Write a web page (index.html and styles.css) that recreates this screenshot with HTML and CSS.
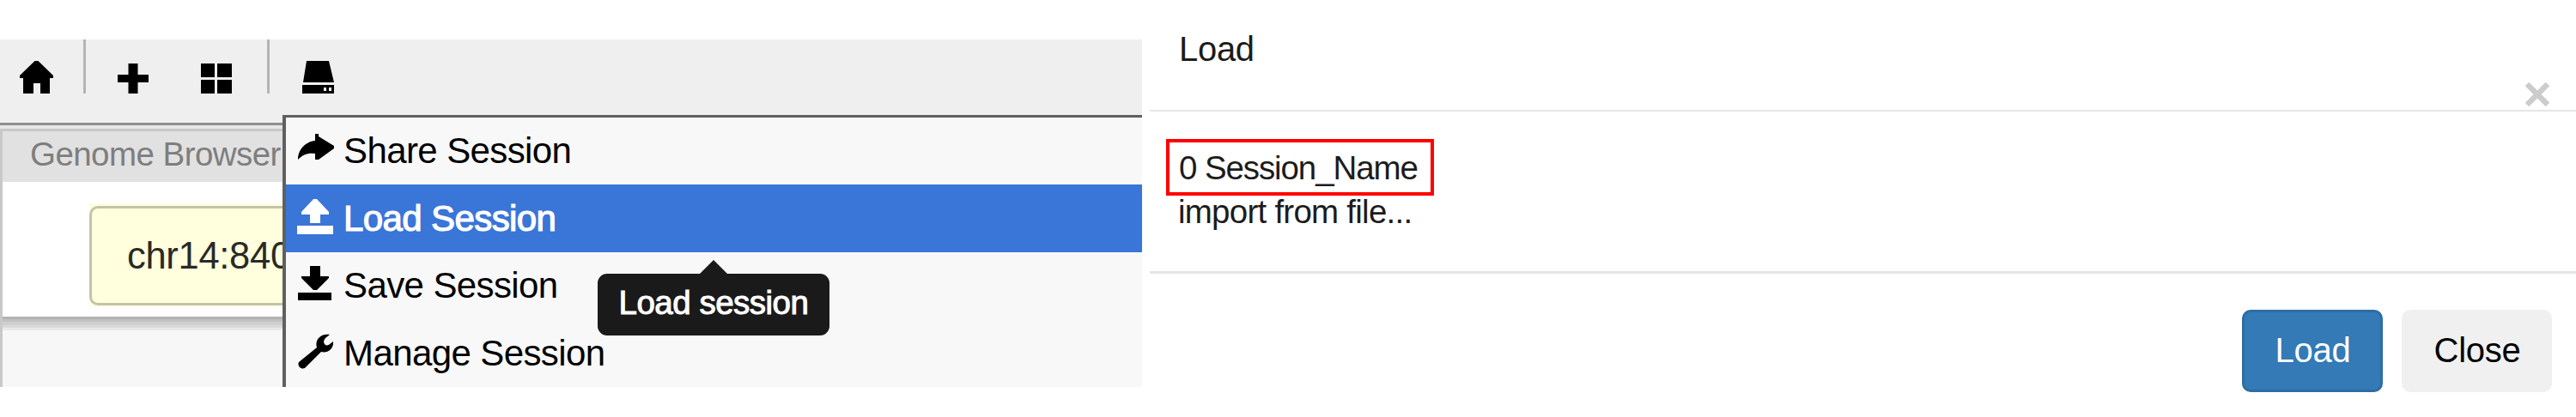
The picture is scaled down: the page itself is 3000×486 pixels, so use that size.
FILE: index.html
```html
<!DOCTYPE html>
<html lang="en">
<head>
<meta charset="utf-8">
<title>Sessions</title>
<link rel="stylesheet" href="styles.css">
</head>
<body>
<div class="page">
  <section class="browser">
    <nav class="toolbar">
      <svg class="tool home" width="44" height="39" viewBox="0 0 44 39"><path d="M19.500 0H23.500L41 17V20H37V38H26V26H18V38H6V20H2V17Z"/></svg>
      <i class="divider"></i>
      <svg class="tool plus" width="40" height="39" viewBox="0 0 40 39"><path d="M13.500 3h11v13H37v9H24.500v13h-11V25H1v-9h12.500z"/></svg>
      <svg class="tool grid" width="40" height="39" viewBox="0 0 40 39"><path d="M1 3h16v16H1zM20 3h17v16H20zM1 22h16v16H1zM20 22h17v16H20z"/></svg>
      <i class="divider second"></i>
      <svg class="tool drive" width="42" height="39" viewBox="0 0 42 39"><path d="M6 0H32L38 25H2ZM1 28H38V38H1Z"/><path class="light" d="M26 31h3v4h-3zM32 31h3v4h-3z"/></svg>
    </nav>
    <div class="gap"></div>
    <div class="panel">
      <div class="panel-head">Genome Browser</div>
      <div class="panel-body"><div class="field"><div class="field-inner">chr14:840</div></div></div>
      <div class="panel-rest"></div>
    </div>
    <div class="menu">
      <div class="item"><svg width="44" height="42" viewBox="0 0 44 42"><path d="M21 3h4V6L43 17V20L25 33H21V26C12 25 7 27 1 33C1 21 10 12 21 11Z"/></svg><span>Share Session</span></div>
      <div class="item active"><svg width="44" height="42" viewBox="0 0 44 42"><path d="M19 0H23L37 15V18H27V28H15V18H5V15ZM0 31H42V41H0Z"/></svg><span>Load Session</span></div>
      <div class="item"><svg width="44" height="42" viewBox="0 0 44 42"><path d="M15 0H27V12H37V14L23 28H19L5 14V12H15ZM1 31H40V40H1Z"/></svg><span>Save Session</span></div>
      <div class="item"><svg width="44" height="42" viewBox="0 0 44 42"><path d="M38 1C29-1 20 6 23 16L2 33C0 37 4 42 9 40L28 21C35 23 43 18 42 9L38 12C34 16 28 11 33 5Z"/></svg><span>Manage Session</span></div>
    </div>
    <div class="tooltip">Load session</div>
  </section>

  <section class="dialog">
    <header class="dialog-head">
      <span class="title">Load</span>
      <svg class="close" width="30" height="30" viewBox="0 0 30 30"><path d="M3 3L27 27M27 3L3 27"/></svg>
    </header>
    <div class="dialog-body">
      <div class="session">0 Session_Name</div>
      <div class="import">import from file...</div>
    </div>
    <footer class="dialog-foot">
      <button class="btn primary">Load</button>
      <button class="btn">Close</button>
    </footer>
  </section>
</div>
</body>
</html>
```
FILE: styles.css
```css
* { box-sizing: border-box; }
body {
  margin: 0;
  background: #fff;
  font-family: "Liberation Sans", Arial, sans-serif;
  font-kerning: none;
  font-variant-ligatures: none;
  white-space: nowrap;
}
svg { display: block; flex: none; }
.page { display: flex; width: 3000px; height: 486px; overflow: hidden; }

.browser {
  position: relative;
  width: 1330px;
  height: 405px;
  margin-top: 46px;
  flex: none;
  overflow: hidden;
  background: #f7f7f7;
}
.toolbar {
  display: flex;
  height: 100px;
  padding-left: 21px;
  background: #efefef;
  border-bottom: 3px solid #8f8f8f;
}
.tool { margin-top: 25px; }
.light { fill: #efefef; }
.divider { width: 3px; height: 63px; margin-left: 32px; background: #b4b4b4; }
.plus { margin-left: 36px; }
.grid { margin-left: 57px; }
.divider.second { margin-left: 38px; }
.drive { margin-left: 37px; }
.gap { height: 4px; background: #e6e6e6; }

.panel { height: 301px; border-top: 3px solid #c9c9c9; border-left: 3px solid #c9c9c9; }
.panel-head {
  height: 59px;
  padding-left: 32px;
  background: #e1e1e1;
  color: #7e7e7e;
  font-size: 38.5px;
  letter-spacing: -.55px;
  line-height: 53px;
}
.panel-body { height: 157px; padding: 25px 0 0 101px; background: #fff; }
.field { width: 400px; height: 120px; padding: 3px 0 1px; background: #ffffde; }
.field-inner {
  height: 116px;
  padding-left: 41px;
  border: 3px solid #c3c3aa;
  border-radius: 10px;
  color: #2a2a25;
  font-size: 43.5px;
  letter-spacing: -.3px;
  line-height: 111px;
}
.panel-rest {
  height: 82px;
  background: linear-gradient(#b3b3b3 0 3px, #c1c1c1 3px 6px, #cecece 6px 10px, #dadada 10px 13px, #e9e9e9 13px 16px, #f7f7f7 16px);
}

.menu {
  position: absolute;
  left: 329px;
  top: 88px;
  width: 1001px;
  border-top: 3px solid #606060;
  border-left: 4px solid #606060;
  background: #f8f8f8;
}
.item {
  display: flex;
  align-items: center;
  gap: 10px;
  height: 78px;
  padding-left: 13px;
  font-size: 42px;
  letter-spacing: -.6px;
  line-height: 78px;
}
.item:nth-child(even) { height: 79px; }
.item svg { margin-top: -4px; }
.item.active { background: #3a75d8; color: #fff; -webkit-text-stroke: 1.2px #fff; }
.item.active svg { fill: #fff; stroke: none; }

.tooltip {
  position: absolute;
  left: 696px;
  top: 273px;
  width: 270px;
  height: 72px;
  border-radius: 11px;
  background: #1a1a1a;
  color: #fff;
  font-size: 38.5px;
  letter-spacing: -.5px;
  line-height: 67px;
  text-align: center;
  -webkit-text-stroke: 1px #fff;
}
.tooltip::before {
  content: "";
  position: absolute;
  left: 119px;
  top: -16px;
  border: 16px solid transparent;
  border-top: 0;
  border-bottom-color: #1a1a1a;
}

.dialog { width: 1661px; margin-left: 9px; color: #1c1c1c; }
.dialog-head {
  display: flex;
  justify-content: space-between;
  align-items: flex-end;
  height: 130px;
  padding: 0 30px 3px 34px;
  border-bottom: 2px solid #e5e5e5;
}
.title { align-self: flex-start; margin-top: 34px; font-size: 40px; letter-spacing: -.3px; line-height: 46px; }
.close { fill: none; stroke: #ccc; stroke-width: 6.5; }
.dialog-body { height: 189px; padding: 32px 0 0 19px; border-bottom: 3px solid #e5e5e5; }
.session {
  width: 312px;
  height: 66px;
  padding-left: 11px;
  border: 4px solid #f00;
  font-size: 38.5px;
  letter-spacing: -1.1px;
  line-height: 60px;
}
.import { padding-left: 14px; font-size: 38.5px; letter-spacing: -.75px; line-height: 44px; margin-top: -3px; }
.dialog-foot { display: flex; justify-content: flex-end; gap: 22px; padding: 42px 28px 0 0; }
.btn {
  width: 175px;
  height: 96px;
  padding: 0 0 1px 1px;
  border: 0;
  border-radius: 10px;
  background: #f0f0f0;
  color: #000;
  font: 40px "Liberation Sans", Arial, sans-serif;
  letter-spacing: -.3px;
}
.btn.primary { width: 164px; background: #337ab7; border: 3px solid #2e6da4; color: #fff; }
```
